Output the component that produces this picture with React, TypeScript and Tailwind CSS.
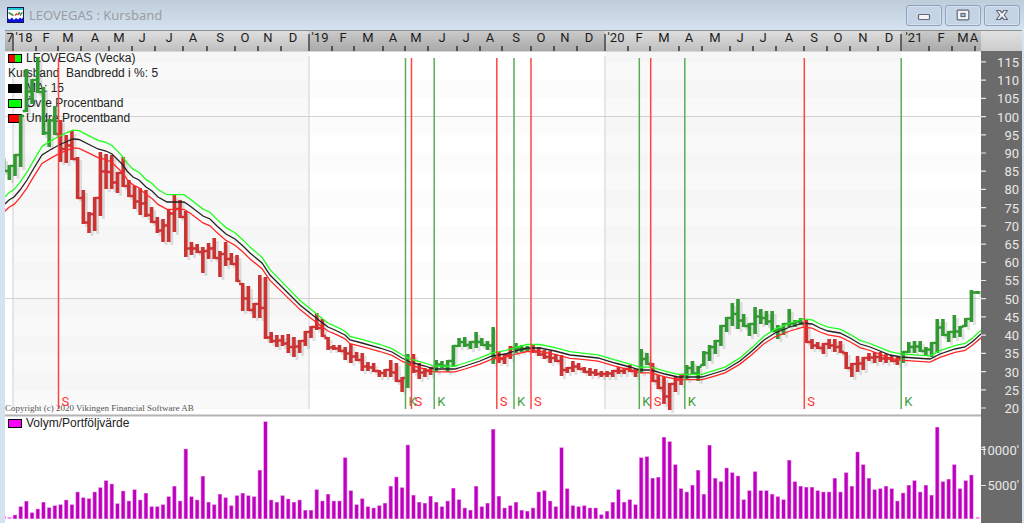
import React from "react";

const BAR_START = 9.3;
const BAR_STEP = 5.693;
const barX = (k: number) => BAR_START + BAR_STEP * k;
const priceY = (price: number) => 408 - (price - 20) * 3.643;

const GREEN = "#339933";
const RED = "#cc3333";

type Run = { color: string; from: number; bars: [number, number][] };

// Top and bottom of each weekly bar, grouped by signal.
const runs: Run[] = [
  {
    color: GREEN,
    from: -1,
    bars: [[158, 172], [165, 180], [154, 176], [115, 167], [69, 112], [79, 104], [57, 93], [87, 135], [119, 147], [106, 135]],
  },
  {
    color: RED,
    from: 9,
    bars: [
      [120, 162], [135, 163], [131, 160], [157, 199], [190, 224], [212, 233], [197, 231], [152, 216], [154, 189], [155, 189],
      [172, 193], [157, 187], [180, 197], [186, 209], [188, 215], [190, 217], [207, 223], [217, 233], [219, 242], [209, 242],
      [195, 232], [200, 218], [211, 257], [242, 255], [244, 253], [247, 273], [243, 259], [238, 259], [251, 277], [242, 266],
      [253, 265], [255, 282], [283, 311], [286, 311], [303, 318], [275, 318], [277, 339], [332, 343], [335, 347], [335, 346],
      [334, 353], [337, 357], [340, 353], [331, 346], [326, 338], [313, 330], [319, 337], [337, 350], [345, 350], [345, 352],
      [347, 360], [344, 363], [352, 361], [353, 371], [362, 371], [363, 372], [370, 377], [369, 377], [360, 377], [363, 382],
      [377, 392],
    ],
  },
  { color: GREEN, from: 70, bars: [[354, 388]] },
  { color: RED, from: 71, bars: [[354, 373], [363, 379], [368, 377], [367, 375]] },
  {
    color: GREEN,
    from: 75,
    bars: [[360, 372], [361, 368], [360, 372], [345, 367], [338, 347], [337, 347], [341, 349], [332, 348], [338, 346], [341, 350], [327, 364]],
  },
  { color: RED, from: 86, bars: [[352, 363], [354, 364], [346, 359]] },
  { color: GREEN, from: 89, bars: [[343, 353], [345, 352], [346, 352]] },
  {
    color: RED,
    from: 92,
    bars: [
      [344, 353], [347, 356], [350, 359], [351, 363], [354, 362], [355, 376], [367, 373], [361, 372], [363, 370], [367, 373],
      [368, 376], [369, 376], [371, 377], [371, 377], [370, 377], [367, 374], [368, 374], [365, 372], [369, 377],
    ],
  },
  { color: GREEN, from: 111, bars: [[349, 373], [353, 365]] },
  { color: RED, from: 113, bars: [[363, 382], [375, 389], [377, 404], [383, 410], [376, 392], [374, 385]] },
  {
    color: GREEN,
    from: 119,
    bars: [
      [365, 380], [361, 375], [366, 381], [351, 366], [345, 361], [340, 354], [325, 346], [317, 332], [303, 326], [299, 329],
      [314, 327], [323, 336], [307, 334], [309, 324], [311, 325], [311, 332], [325, 339], [323, 335], [309, 327], [320, 327],
      [318, 325],
    ],
  },
  {
    color: RED,
    from: 140,
    bars: [
      [320, 343], [339, 349], [342, 349], [343, 354], [339, 349], [339, 352], [341, 353], [352, 369], [363, 377], [356, 372],
      [357, 370], [353, 361], [352, 363], [352, 362], [354, 363], [355, 362], [357, 365],
    ],
  },
  {
    color: GREEN,
    from: 157,
    bars: [
      [351, 363], [342, 353], [341, 353], [341, 352], [347, 356], [342, 357], [319, 353], [319, 336], [331, 342], [315, 338],
      [326, 337], [318, 327], [290, 322], [291, 294],
    ],
  },
];

type Bar = { x: number; top: number; bottom: number; open: number; close: number; color: string };

const flat = runs.flatMap((run) => run.bars.map(([top, bottom], i) => ({ k: run.from + i, top, bottom, color: run.color })));

const bars: Bar[] = [];
flat.forEach((bar, i) => {
  const next = flat[i + 1] ?? bar;
  const clamp = (v: number) => Math.min(bar.bottom - 1, Math.max(bar.top + 1, v));
  const previous = i > 0 ? bars[i - 1].close : (bar.top + bar.bottom) / 2;
  bars.push({
    x: barX(bar.k),
    top: bar.top,
    bottom: bar.bottom,
    open: clamp(previous),
    close: clamp((next.top + next.bottom) / 2),
    color: bar.color,
  });
});

const barPath = (color: string) =>
  bars
    .filter((b) => b.color === color)
    .map((b) => `M${b.x} ${b.top}V${b.bottom}`)
    .join("");
const tickPath = (color: string) =>
  bars
    .filter((b) => b.color === color)
    .map((b) => `M${b.x - 3.6} ${b.open}H${b.x}M${b.x} ${b.close}H${b.x + 3.4}`)
    .join("");
const shadowPath = bars.map((b) => `M${b.x + 3} ${b.top + 3}V${b.bottom + 3}`).join("");

// Volume bar heights, in thirds of a unit.
const volumes = [
  13, 38, 54, 20, 31, 51, 35, 41, 44, 58, 44, 82, 65, 62, 82, 95, 116, 106, 47, 85, 55, 89, 58, 78, 38, 38, 44, 68, 99, 55, 211, 68,
  58, 129, 51, 44, 75, 65, 41, 71, 78, 71, 68, 147, 293, 58, 51, 71, 61, 51, 58, 27, 27, 89, 55, 75, 55, 55, 185, 86, 44, 62, 38, 34,
  41, 48, 99, 127, 95, 223, 72, 51, 48, 69, 51, 38, 55, 93, 59, 34, 27, 99, 38, 48, 270, 69, 34, 41, 51, 27, 24, 34, 82, 86, 55, 38,
  215, 92, 41, 38, 41, 34, 34, 14, 24, 51, 89, 51, 59, 44, 185, 188, 123, 126, 246, 233, 164, 92, 82, 102, 147, 75, 222, 123, 113,
  154, 140, 130, 59, 86, 143, 86, 86, 75, 68, 59, 177, 113, 99, 96, 96, 86, 82, 82, 123, 82, 140, 99, 202, 164, 123, 89, 92, 99, 92,
  55, 79, 102, 116, 82, 102, 72, 276, 113, 120, 164, 92, 116, 133,
];

const average: [number, number][] = [
  [5, 204], [9, 200], [14, 197], [20, 190], [27, 180], [34, 168], [42, 155], [50, 150], [59, 145], [68, 141], [73, 139], [79, 139.5],
  [90, 145], [98, 149], [106, 151], [112, 154], [122, 164], [127, 171], [133, 177], [139, 180], [146, 187], [152, 191], [158, 197],
  [167, 202], [184, 202], [190, 206], [203, 216], [210, 219], [217, 226], [226, 234], [235, 239], [243, 246], [250, 253], [262, 263],
  [270, 275], [279, 284], [288, 293], [300, 305], [310, 313], [320, 321], [328, 327], [337, 331], [345, 335], [350, 340], [362, 343],
  [380, 348], [392, 352], [402, 358], [410, 362], [425, 366], [434, 369], [455, 369], [465, 366], [480, 361], [492, 356], [505, 354],
  [515, 351], [527, 348], [540, 348], [555, 351], [570, 355], [580, 356], [598, 358], [615, 363], [630, 367], [640, 370], [651, 370],
  [665, 374], [678, 377], [702, 377], [712, 374], [725, 370], [740, 361], [752, 351], [764, 340], [775, 333], [790, 327], [803, 323],
  [812, 324], [820, 328], [828, 331], [840, 333], [850, 338], [860, 344], [870, 347], [880, 351], [890, 355], [901, 357], [915, 358],
  [930, 359], [940, 354], [955, 349], [965, 347], [972, 342], [981, 334],
];

const ZERO_Y = 480.9;
const bandPoints = (factor: number) => average.map(([x, y]) => `${x},${(ZERO_Y - (ZERO_Y - y) * factor).toFixed(1)}`).join(" ");

const monthLabels: [number, string][] = [
  [10, "7"], [24, "'18"], [46, "F"], [68, "M"], [95, "A"], [119, "M"], [142, "J"], [169, "J"], [193, "A"], [220, "S"], [245, "O"],
  [268, "N"], [293, "D"], [320, "'19"], [343, "F"], [368, "M"], [393, "A"], [416, "M"], [442, "J"], [466, "J"], [490, "A"], [516, "S"],
  [541, "O"], [565, "N"], [589, "D"], [616, "'20"], [639, "F"], [664, "M"], [689, "A"], [715, "M"], [740, "J"], [763, "J"], [789, "A"],
  [814, "S"], [838, "O"], [863, "N"], [889, "D"], [914, "'21"], [941, "F"], [963, "M"], [974, "A"],
];
const monthTicks = [
  36, 58, 81, 109, 132, 155, 183, 207, 235, 258, 281, 332, 354, 383, 405, 428, 457, 480, 502, 531, 554, 577, 628, 650, 679, 702, 730,
  753, 776, 804, 827, 850, 878, 929, 952, 975,
];
const yearTicks = [13, 309, 605, 901];

const signals: [number, "K" | "S"][] = [
  [58.5, "S"], [405.5, "K"], [411.5, "S"], [434.2, "K"], [496.8, "S"], [514, "K"], [531, "S"], [639.3, "K"], [650.7, "S"], [684.8, "K"],
  [804.3, "S"], [901.2, "K"],
];

const prices = Array.from({ length: 20 }, (_, i) => 20 + i * 5);

const legend: { label: string; colors: string[] }[] = [
  { label: "LEOVEGAS (Vecka)", colors: ["bg-[#ff0000]", "bg-[#00ff00]"] },
  { label: "Kursband  Bandbredd i %: 5", colors: [] },
  { label: "MA: 15", colors: ["bg-black"] },
  { label: "Övre Procentband", colors: ["bg-[#00ff00]"] },
  { label: "Undre Procentband", colors: ["bg-[#ff0000]"] },
];

function Swatch({ colors }: { colors: string[] }) {
  return (
    <span className="flex h-[9px] w-[14px] border border-black">
      {colors.map((c) => (
        <span key={c} className={`flex-1 ${c}`} />
      ))}
    </span>
  );
}

function Backdrop() {
  return (
    <svg viewBox="5 30 1017 493" className="block h-auto w-full" fontFamily="Roboto, sans-serif" aria-hidden="true">
      <defs>
        <linearGradient id="scaleLight" x1="0" y1="0" x2="0" y2="1">
          <stop offset="0" stopColor="#e0e0e0" />
          <stop offset="1" stopColor="#bfbfbf" />
        </linearGradient>
        <linearGradient id="scaleDark" x1="0" y1="0" x2="0" y2="1">
          <stop offset="0" stopColor="#cccccc" />
          <stop offset="1" stopColor="#a9a9a9" />
        </linearGradient>
        <linearGradient id="scaleEnd" x1="0" y1="0" x2="0" y2="1">
          <stop offset="0" stopColor="#e2e2e2" />
          <stop offset="1" stopColor="#cccccc" />
        </linearGradient>
      </defs>
      <rect x="5" y="30" width="1017" height="493" fill="#ffffff" />
      <rect x="5" y="30" width="8" height="21" fill="url(#scaleDark)" />
      <rect x="13" y="30" width="296" height="21" fill="url(#scaleLight)" />
      <rect x="309" y="30" width="296" height="21" fill="url(#scaleDark)" />
      <rect x="605" y="30" width="296" height="21" fill="url(#scaleLight)" />
      <rect x="901" y="30" width="80" height="21" fill="url(#scaleDark)" />
      <rect x="981" y="30" width="41" height="21" fill="url(#scaleEnd)" />
      <rect x="5" y="29" width="1017" height="2" fill="#8a918f" />

      <rect x="13" y="52" width="296" height="357" fill="#f6f6f6" />
      <rect x="605" y="52" width="296" height="357" fill="#f6f6f6" />
      {prices.slice(0, -1).map((p, i) =>
        i % 2 === 0 ? (
          <g key={p}>
            <rect x="13" y={priceY(p + 5)} width="296" height="18.2" fill="#f9f9f9" />
            <rect x="605" y={priceY(p + 5)} width="296" height="18.2" fill="#f9f9f9" />
          </g>
        ) : (
          <g key={p}>
            <rect x="309" y={priceY(p + 5)} width="296" height="18.2" fill="#fcfcfc" />
            <rect x="901" y={priceY(p + 5)} width="80" height="18.2" fill="#fcfcfc" />
          </g>
        ),
      )}
      <path d="M13 52V409M309 56V409M605 56V409" stroke="#dedede" strokeWidth="1.5" />
      <path d="M5 116.5H981M5 298.5H981" stroke="#d2d2d2" strokeWidth="1" />
      <rect x="5" y="51" width="976" height="1" fill="#d8d8d8" />

      {monthLabels.map(([x, label]) => (
        <text key={x} x={x} y="42" fontSize="13" textAnchor="middle" fill="#1c1c1c">
          {label}
        </text>
      ))}
      <path d={monthTicks.map((x) => `M${x} 46V51`).join("")} stroke="#333333" strokeWidth="1.5" />
      <path d={yearTicks.map((x) => `M${x} 34V51`).join("")} stroke="#444444" strokeWidth="1.5" />

      <rect x="981" y="51" width="41" height="472" fill="#6b6b6b" />
      <path d={prices.map((p) => `M981 ${priceY(p)}H986`).join("") + "M981 449.5H986M981 485.5H986"} stroke="#e4e4e4" strokeWidth="1.2" />
      {prices.map((p) => (
        <text key={p} x="1019" y={priceY(p) + 5} fontSize="13" textAnchor="end" fill="#e8e8e8">
          {p}
        </text>
      ))}
      <text x="1019" y="455" fontSize="13" textAnchor="end" fill="#e8e8e8">
        10000'
      </text>
      <text x="1019" y="490" fontSize="13" textAnchor="end" fill="#e8e8e8">
        5000'
      </text>
      <rect x="5" y="414" width="976" height="1" fill="#d6d6d6" />
      <rect x="5" y="415" width="976" height="1" fill="#b4b4b4" />
      <rect x="5" y="416" width="976" height="1" fill="#dadada" />
    </svg>
  );
}

function Series() {
  return (
    <svg
      viewBox="5 30 1017 493"
      className="absolute inset-0 h-full w-full"
      fontFamily="Roboto, sans-serif"
      role="img"
      aria-label="LEOVEGAS Kursband"
    >
      <clipPath id="plot">
        <rect x="5" y="52" width="976" height="471" />
      </clipPath>
      <g clipPath="url(#plot)" fill="none">
        <path d={shadowPath} stroke="#000000" strokeOpacity="0.11" strokeWidth="3" />
        {[GREEN, RED].map((color) => (
          <g key={color} stroke={color}>
            <path d={barPath(color)} strokeWidth="3.6" />
            <path d={tickPath(color)} strokeWidth="2.4" />
          </g>
        ))}
        <polyline points={bandPoints(1.026)} stroke="#1eff1e" strokeWidth="1.3" />
        <polyline points={bandPoints(1)} stroke="#222222" strokeWidth="1.3" />
        <polyline points={bandPoints(0.974)} stroke="#ff2626" strokeWidth="1.3" />
      </g>
      {signals.map(([x, kind]) => (
        <g key={x}>
          <path d={`M${x} 58V409`} stroke={kind === "K" ? "#5aac5a" : "#ff4444"} strokeWidth="1.5" />
          <text x={x + 3} y="406" fontSize="13" fill={kind === "K" ? "#3c9c3c" : "#ff3333"}>
            {kind}
          </text>
        </g>
      ))}
      <path
        d={volumes.map((h, i) => `M${barX(i + 1)} 519V${519 - h / 3}`).join("")}
        stroke="#e28be2"
        strokeWidth="4.2"
        fill="none"
      />
      <path
        d={volumes.map((h, i) => `M${barX(i + 1)} 518.5V${519.6 - h / 3}`).join("")}
        stroke="#c000c0"
        strokeWidth="3"
        fill="none"
      />
      <path d="M5 516V519M7.5 518H11.5M976 518H979.5" stroke="#ff66ff" strokeWidth="1.6" />
    </svg>
  );
}

const controlClass =
  "flex h-[21px] w-9 items-center justify-center rounded-[3px] border border-[#8fa0bd] bg-[#c5d4e4] shadow-[inset_0_0_0_1px_#d5e1ee]";

function TitleBar() {
  return (
    <header className="flex h-[30px] items-center bg-linear-to-b from-[#bfccda] to-[#d5e3f1] pr-1 pl-[7px]">
      <svg viewBox="0 0 17 16" className="h-4 w-[17px]" aria-hidden="true">
        <rect width="17" height="16" fill="#1a1a50" />
        <rect x="1" y="1" width="15" height="14" fill="#ffffff" />
        <rect x="1" y="1" width="15" height="2" fill="#22cbd8" />
        <path d="M1.5 5.5L4 7L6.5 8.5" stroke="#2f9a3a" strokeWidth="1.5" fill="none" />
        <path d="M8 8.5L10 6.5M10.5 8L12 6" stroke="#d93a2b" strokeWidth="1.3" />
        <path d="M12 5L13.5 8L15.5 5" stroke="#2f9a3a" strokeWidth="1.3" fill="none" />
        <path d="M1 15V11.5L3 12.5L5 10.5L7 13L9 11L11 12.5L13 10.5L14.5 12L16 10.5V15Z" fill="#0a12e0" />
      </svg>
      <h1 className="flex-1 pl-[5px] font-['Noto_Sans',sans-serif] text-[13px] leading-4 text-[#999da2]">LEOVEGAS : Kursband</h1>
      <div className="flex gap-[3px]">
        <button type="button" aria-label="Minimera" className={controlClass}>
          <svg viewBox="0 0 14 12" className="h-3 w-[14px]">
            <rect x="1.5" y="5.5" width="11" height="5" rx="1" fill="#f4f4f4" stroke="#62697c" strokeWidth="1.2" />
          </svg>
        </button>
        <button type="button" aria-label="Maximera" className={controlClass}>
          <svg viewBox="0 0 14 12" className="h-3 w-[14px]">
            <rect x="1.2" y="1.2" width="11.6" height="9.6" rx="1" fill="#f4f4f4" stroke="#62697c" strokeWidth="1.2" />
            <rect x="5" y="4.5" width="4" height="3" fill="#b8c8dc" stroke="#62697c" strokeWidth="1.2" />
          </svg>
        </button>
        <button type="button" aria-label="Stäng" className={controlClass}>
          <svg viewBox="0 0 14 12" className="h-3 w-[14px]">
            <path
              d="M1.5 1.5H5L7 3.8L9 1.5H12.5L9.2 6L12.5 10.5H9L7 8.2L5 10.5H1.5L4.8 6Z"
              fill="#f4f4f4"
              stroke="#62697c"
              strokeWidth="1.2"
              strokeLinejoin="round"
            />
          </svg>
        </button>
      </div>
    </header>
  );
}

export default function App() {
  return (
    <div className="min-h-screen bg-[#d5e3f1]">
      <TitleBar />
      <main className="relative mr-[2px] ml-[5px]">
        <Backdrop />
        <ul className="absolute top-[21px] left-[3px] font-['Liberation_Sans',sans-serif] text-[12px] leading-[15px] text-[#222]">
          {legend.map(({ label, colors }) => (
            <li key={label} className="flex items-center gap-1 whitespace-pre">
              {colors.length > 0 && <Swatch colors={colors} />}
              {label}
            </li>
          ))}
        </ul>
        <p className="absolute top-[75.5%] left-0 font-['Liberation_Serif',serif] text-[9px] leading-3 text-[#555]">
          Copyright (c) 2020 Vikingen Financial Software AB
        </p>
        <div className="absolute top-[78.2%] left-[3px] flex items-center gap-1 font-['Liberation_Sans',sans-serif] text-[12px] leading-[15px] text-[#222]">
          <Swatch colors={["bg-[#ff00ff]"]} />
          Volym/Portföljvärde
        </div>
        <Series />
      </main>
    </div>
  );
}
